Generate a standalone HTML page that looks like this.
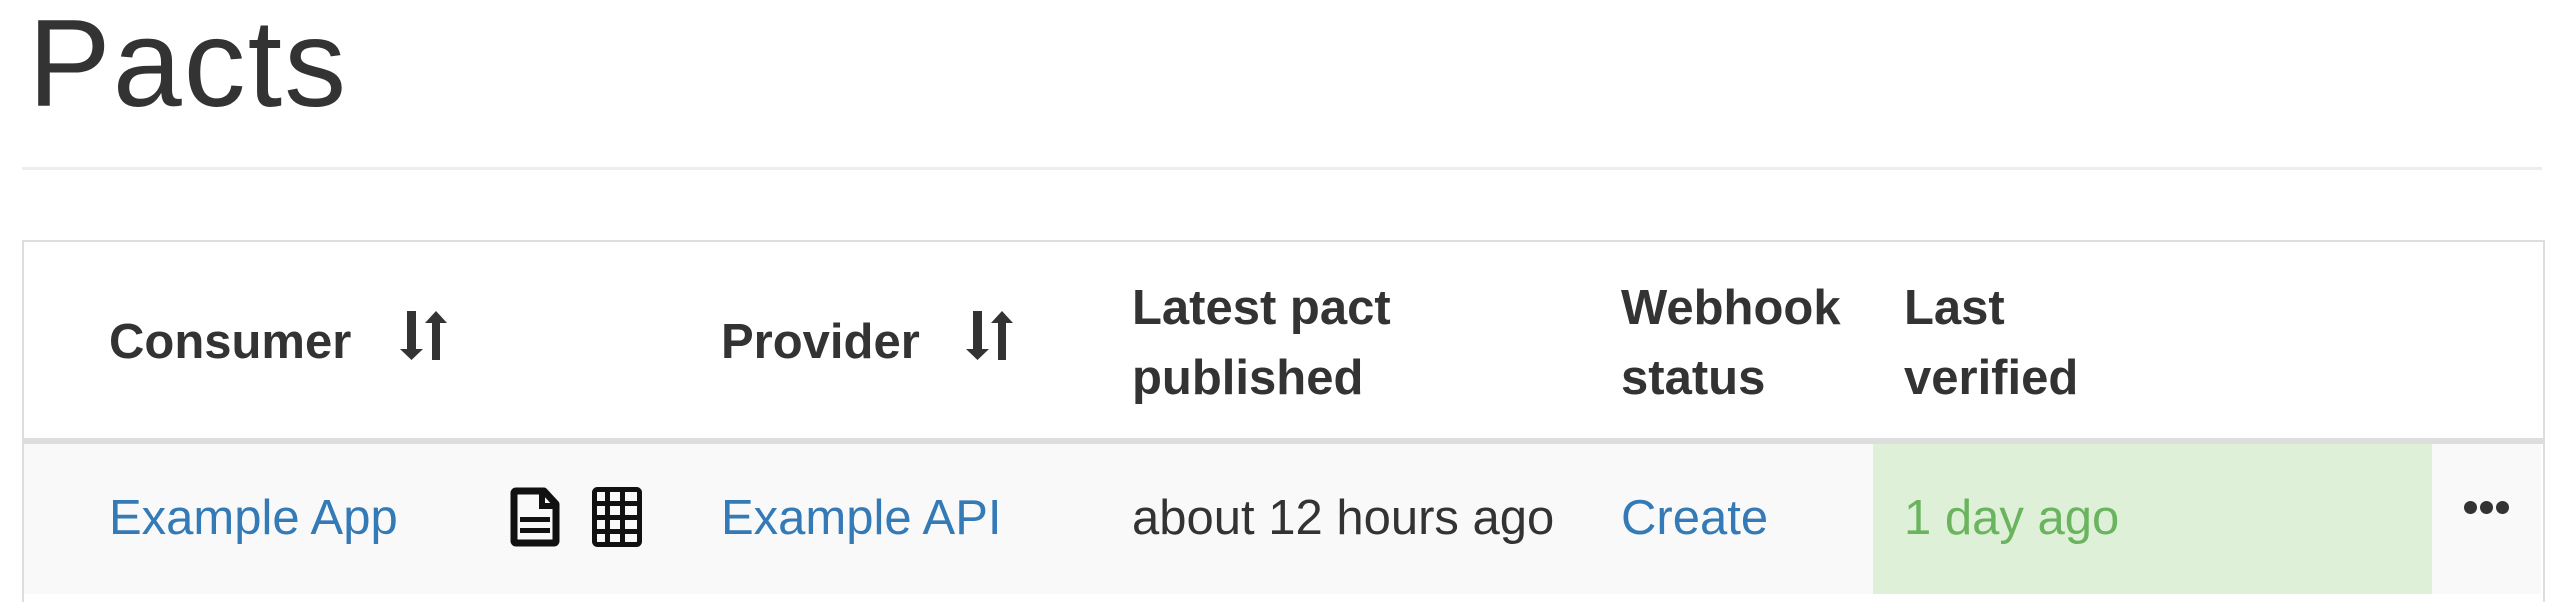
<!DOCTYPE html>
<html><head><meta charset="utf-8"><style>
body{margin:0;width:2550px;height:588px;background:#fff;position:relative;overflow:hidden;font-family:"Liberation Sans",Arial,sans-serif;color:#333}
.a{position:absolute;white-space:nowrap}
h1{position:absolute;left:28px;top:-4px;margin:0;font-size:124px;font-weight:500;line-height:1.1;color:#333;letter-spacing:2px}
.hr{position:absolute;left:22px;top:167px;width:2520px;height:3px;background:#eee}
.tbl{position:absolute;left:22px;top:240px;width:2519px;height:360px;border:2px solid #ddd;border-bottom:none}
.hdrb{position:absolute;left:22px;top:438px;width:2523px;height:6px;background:#ddd}
.row{position:absolute;left:24px;top:444px;width:2517px;height:150px;background:#f9f9f9}
.green{position:absolute;left:1873px;top:444px;width:559px;height:150px;background:#dff0d8}
.th{font-weight:bold;font-size:49px;line-height:70px}
.td{font-size:49px;line-height:70px}
.link{color:#337ab7}
</style></head><body>
<h1>Pacts</h1>
<div class="hr"></div>
<div class="tbl"></div>
<div class="row"></div>
<div class="green"></div>
<div class="hdrb"></div>

<div class="a th" style="left:109px;top:307px">Consumer</div>
<svg class="a" style="left:400px;top:311px" width="48" height="50" viewBox="0 0 48 50"><rect x="7" y="0" width="9" height="40" fill="#333"/><polygon points="0,38 23,38 11.5,49" fill="#333"/><rect x="32" y="10" width="8" height="39" fill="#333"/><polygon points="25,12 47,12 36,0" fill="#333"/></svg>
<div class="a th" style="left:721px;top:307px">Provider</div>
<svg class="a" style="left:966px;top:311px" width="48" height="50" viewBox="0 0 48 50"><rect x="7" y="0" width="9" height="40" fill="#333"/><polygon points="0,38 23,38 11.5,49" fill="#333"/><rect x="32" y="10" width="8" height="39" fill="#333"/><polygon points="25,12 47,12 36,0" fill="#333"/></svg>
<div class="a th" style="left:1132px;top:273px">Latest pact<br>published</div>
<div class="a th" style="left:1621px;top:273px">Webhook<br>status</div>
<div class="a th" style="left:1904px;top:273px">Last<br>verified</div>

<div class="a td link" style="left:109px;top:483px">Example App</div>
<svg class="a" style="left:510px;top:487px" width="50" height="60" viewBox="0 0 50 60"><path d="M6 4 H34 L46 17 V54 a2 2 0 0 1 -2 2 H6 a2 2 0 0 1 -2 -2 V6 a2 2 0 0 1 2 -2 Z" fill="none" stroke="#111" stroke-width="7" stroke-linejoin="round"/><path d="M32 4 V19 H46" fill="none" stroke="#111" stroke-width="6"/><rect x="10" y="30" width="30" height="5" fill="#111"/><rect x="10" y="41" width="30" height="5" fill="#111"/></svg>
<svg class="a" style="left:592px;top:487px" width="50" height="60" viewBox="0 0 50 60"><rect x="2.5" y="2.5" width="45" height="55" rx="3" fill="none" stroke="#111" stroke-width="5"/><g fill="#111"><rect x="13" y="2" width="5" height="56"/><rect x="28" y="2" width="5" height="56"/><rect x="2" y="14" width="46" height="5"/><rect x="2" y="28" width="46" height="5"/><rect x="2" y="42" width="46" height="5"/></g></svg>
<div class="a td link" style="left:721px;top:483px">Example API</div>
<div class="a td" style="left:1132px;top:483px">about 12 hours ago</div>
<div class="a td link" style="left:1621px;top:483px">Create</div>
<div class="a td" style="left:1904px;top:483px;color:#6bb45f">1 day ago</div>
<div class="a" style="left:2464px;top:501px;font-size:0">
<span style="display:inline-block;width:13px;height:13px;border-radius:50%;background:#333;margin-right:3px"></span><span style="display:inline-block;width:13px;height:13px;border-radius:50%;background:#333;margin-right:3px"></span><span style="display:inline-block;width:13px;height:13px;border-radius:50%;background:#333"></span></div>
</body></html>
